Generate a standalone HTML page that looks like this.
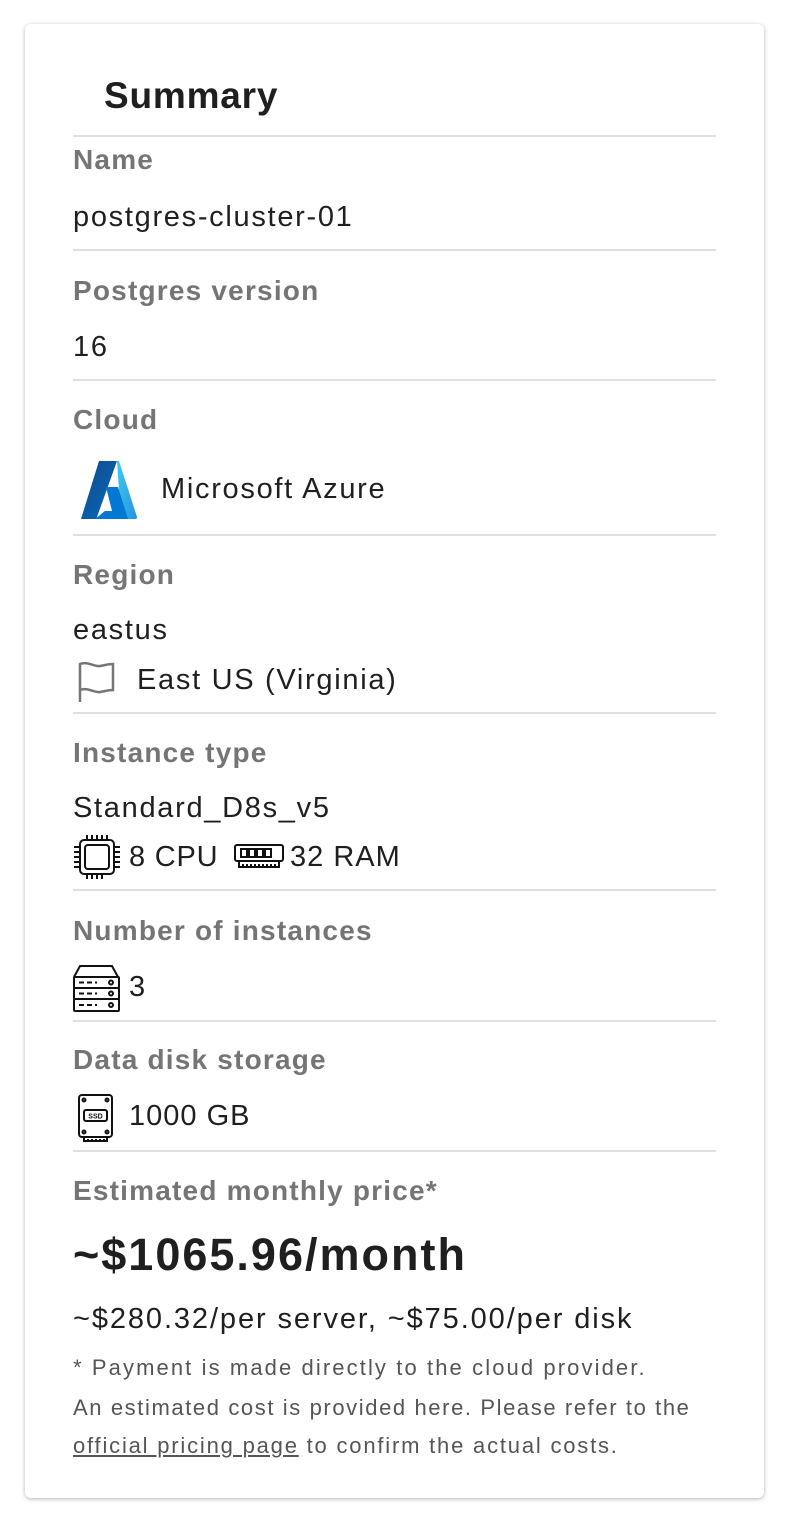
<!DOCTYPE html>
<html><head><meta charset="utf-8"><style>
body{margin:0;background:#fff;width:794px;height:1534px;position:relative;font-family:"Liberation Sans",Arial,sans-serif;}
.card{position:absolute;left:25px;top:24px;width:739px;height:1474px;background:#fff;border-radius:6px;box-shadow:0 1px 4px rgba(0,0,0,.3);}
.t{position:absolute;left:73px;line-height:40px;white-space:nowrap;color:#1f1f1f;font-size:29px;letter-spacing:1.7px;}
.l{font-weight:bold;color:#757575;font-size:28px;letter-spacing:1.2px;}
.n{font-size:22px;line-height:26px;color:#555;letter-spacing:1.7px;}
.hr{position:absolute;left:73px;width:643px;height:2px;background:#e0e0e0;}
svg{position:absolute;}
</style></head><body>
<div class="card"></div>
<div class="t" style="left:104px;top:76px;font-size:37px;font-weight:bold;letter-spacing:0.8px">Summary</div>
<div class="hr" style="top:135px"></div>
<div class="t l" style="top:140px">Name</div>
<div class="t" style="top:197px">postgres-cluster-01</div>
<div class="hr" style="top:249px"></div>
<div class="t l" style="top:271px">Postgres version</div>
<div class="t" style="top:327px">16</div>
<div class="hr" style="top:379px"></div>
<div class="t l" style="top:400px">Cloud</div>
<svg style="left:79px;top:461px" width="60" height="58" viewBox="0 0 60 58">
<defs><linearGradient id="a" x1="0" y1="0" x2="1" y2="1"><stop offset="0" stop-color="#114a8b"/><stop offset="1" stop-color="#0669bc"/></linearGradient>
<linearGradient id="b" x1="0" y1="0" x2="1" y2="1"><stop offset="0" stop-color="#3ccbf4"/><stop offset="1" stop-color="#2892df"/></linearGradient></defs>
<path d="M20 0H38L18 56a2 2 0 0 1-2 2H2L20 0Z" fill="url(#a)"/>
<path d="M38 0h2l18 56a1.5 1.5 0 0 1-1.5 2H42L38 0Z" fill="url(#b)"/>
<path d="M27 26h12l10 32H16l10-8H33Z" fill="#0078d4"/>
</svg>
<div class="t" style="left:161px;top:469px">Microsoft Azure</div>
<div class="hr" style="top:534px"></div>
<div class="t l" style="top:555px">Region</div>
<div class="t" style="top:610px">eastus</div>
<svg style="left:76px;top:660px" width="40" height="42" viewBox="0 0 40 42" fill="none" stroke="#757575" stroke-width="2.5">
<path d="M4 42V4c8-3 14 3 20 2s8-2 13-2v26c-5 0-7 1-13 2s-12-5-20-2"/></svg>
<div class="t" style="left:137px;top:660px">East US (Virginia)</div>
<div class="hr" style="top:712px"></div>
<div class="t l" style="top:733px">Instance type</div>
<div class="t" style="top:788px">Standard_D8s_v5</div>
<svg style="left:72px;top:834px" width="50" height="46" viewBox="0 0 50 46" fill="none" stroke="#111" stroke-width="2">
<rect x="8" y="6" width="34" height="34" rx="4"/><rect x="13" y="11" width="24" height="24" rx="3"/>
<path d="M15 1v5M20 1v5M25 1v5M30 1v5M35 1v5M15 40v5M20 40v5M25 40v5M30 40v5M2 13h6M2 18h6M2 23h6M2 28h6M2 33h6M42 13h6M42 18h6M42 23h6M42 28h6M42 33h6"/></svg>
<div class="t" style="left:129px;top:837px;letter-spacing:0.8px">8 CPU</div>
<svg style="left:233px;top:843px" width="52" height="28" viewBox="0 0 52 28" fill="none" stroke="#111" stroke-width="2">
<rect x="2" y="2" width="48" height="16" rx="2"/><rect x="8" y="6" width="6" height="8"/><rect x="16" y="6" width="6" height="8"/><rect x="24" y="6" width="6" height="8"/><rect x="32" y="6" width="6" height="8"/>
<path d="M6 18v6h40v-6M10 24v-3M14 24v-3M18 24v-3M22 24v-3M26 24v-3M30 24v-3M34 24v-3M38 24v-3M42 24v-3"/></svg>
<div class="t" style="left:290px;top:837px;letter-spacing:1px">32 RAM</div>
<div class="hr" style="top:889px"></div>
<div class="t l" style="top:911px">Number of instances</div>
<svg style="left:72px;top:963px" width="50" height="50" viewBox="0 0 50 50" fill="none" stroke="#111" stroke-width="2">
<path d="M2 14l6-11h32l6 11"/><rect x="2" y="14" width="45" height="11" rx="1"/><rect x="2" y="25" width="45" height="11" rx="1"/><rect x="2" y="36" width="45" height="12" rx="1"/>
<path d="M7 19.5h5M15 19.5h5M23 19.5h2M7 30.5h5M15 30.5h5M23 30.5h2M7 42h5M15 42h5M23 42h2"/><circle cx="39" cy="19.5" r="2"/><circle cx="39" cy="30.5" r="2"/><circle cx="39" cy="42" r="2"/></svg>
<div class="t" style="left:129px;top:967px">3</div>
<div class="hr" style="top:1020px"></div>
<div class="t l" style="top:1040px">Data disk storage</div>
<svg style="left:77px;top:1093px" width="38" height="50" viewBox="0 0 38 50" fill="none" stroke="#111" stroke-width="2">
<rect x="2" y="2" width="33" height="42" rx="3"/><path d="M7 44v4h23v-4M11 48v-2M15 48v-2M19 48v-2M23 48v-2M27 48v-2"/>
<rect x="7" y="17" width="23" height="11" rx="2"/><circle cx="7" cy="7" r="1.5"/><circle cx="30" cy="7" r="1.5"/><circle cx="7" cy="39" r="1.5"/><circle cx="30" cy="39" r="1.5"/>
<text x="18.5" y="25.5" font-size="7" font-weight="bold" text-anchor="middle" fill="#111" stroke="none" font-family="Liberation Sans">SSD</text></svg>
<div class="t" style="left:129px;top:1096px;letter-spacing:1px">1000 GB</div>
<div class="hr" style="top:1150px"></div>
<div class="t l" style="top:1171px">Estimated monthly price*</div>
<div class="t" style="top:1230px;font-size:45px;font-weight:bold;line-height:50px;letter-spacing:2px">~$1065.96/month</div>
<div class="t" style="top:1299px;letter-spacing:1.9px">~$280.32/per server, ~$75.00/per disk</div>
<div class="t n" style="top:1355px;letter-spacing:2.1px">* Payment is made directly to the cloud provider.</div>
<div class="t n" style="top:1395px;letter-spacing:1.6px">An estimated cost is provided here. Please refer to the</div>
<div class="t n" style="top:1433px;letter-spacing:1.8px"><span style="text-decoration:underline">official pricing page</span> to confirm the actual costs.</div>
</body></html>
